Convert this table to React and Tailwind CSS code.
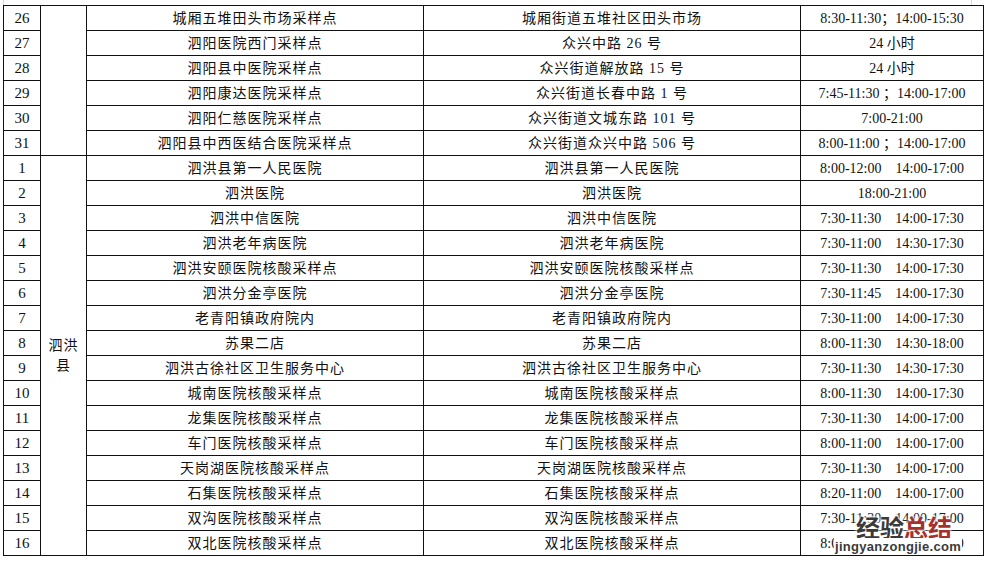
import React from "react";

const upper = [
  ["26", "城厢五堆田头市场采样点", "城厢街道五堆社区田头市场", "8:30-11:30；14:00-15:30"],
  ["27", "泗阳医院西门采样点", "众兴中路 26 号", "24 小时"],
  ["28", "泗阳县中医院采样点", "众兴街道解放路 15 号", "24 小时"],
  ["29", "泗阳康达医院采样点", "众兴街道长春中路 1 号", "7:45-11:30 ；14:00-17:00"],
  ["30", "泗阳仁慈医院采样点", "众兴街道文城东路 101 号", "7:00-21:00"],
  ["31", "泗阳县中西医结合医院采样点", "众兴街道众兴中路 506 号", "8:00-11:00 ；14:00-17:00"],
];

const lower = [
  ["1", "泗洪县第一人民医院", "8:00-12:00    14:00-17:00"],
  ["2", "泗洪医院", "18:00-21:00"],
  ["3", "泗洪中信医院", "7:30-11:30    14:00-17:30"],
  ["4", "泗洪老年病医院", "7:30-11:00    14:30-17:30"],
  ["5", "泗洪安颐医院核酸采样点", "7:30-11:30    14:00-17:30"],
  ["6", "泗洪分金亭医院", "7:30-11:45    14:00-17:30"],
  ["7", "老青阳镇政府院内", "7:30-11:00    14:00-17:30"],
  ["8", "苏果二店", "8:00-11:30    14:30-18:00"],
  ["9", "泗洪古徐社区卫生服务中心", "7:30-11:30    14:30-17:30"],
  ["10", "城南医院核酸采样点", "8:00-11:30    14:00-17:30"],
  ["11", "龙集医院核酸采样点", "7:30-11:30    14:00-17:00"],
  ["12", "车门医院核酸采样点", "8:00-11:00    14:00-17:00"],
  ["13", "天岗湖医院核酸采样点", "7:30-11:30    14:00-17:00"],
  ["14", "石集医院核酸采样点", "8:20-11:00    14:00-17:00"],
  ["15", "双沟医院核酸采样点", "7:30-11:30    14:00-17:00"],
  ["16", "双北医院核酸采样点", "8:00-11:00    14:00-17:00"],
];

const serif = "font-['Liberation_Serif','Noto_Sans_CJK_SC',serif]";
const cjk = "font-['Liberation_Serif','Noto_Sans_CJK_SC',sans-serif]";

function Row({ num, name, addr, time }) {
  return (
    <>
      <div className={`col-start-1 bg-white flex items-center justify-center text-[15px] text-[#111] ${serif}`}>{num}</div>
      <div className={`col-start-3 bg-white flex items-center justify-center text-[14px] tracking-[1px] text-[#111] ${cjk}`}>{name}</div>
      <div className={`col-start-4 bg-white flex items-center justify-center text-[14px] tracking-[1px] text-[#111] ${cjk}`}>{addr}</div>
      <div className={`col-start-5 bg-white flex items-center justify-center text-[14px] whitespace-pre text-[#111] ${cjk}`}>{time}</div>
    </>
  );
}

export default function App() {
  return (
    <div className="relative w-[987px] h-[563px] bg-white overflow-hidden">
      <div className="pt-[5px] pl-[3px]">
        <div className="grid w-fit grid-cols-[36px_45px_336px_376px_182px] grid-rows-[repeat(22,24px)] gap-px p-px bg-[#111]">
          <div className="col-start-2 row-start-1 row-span-6 bg-white"></div>
          <div className={`col-start-2 row-start-7 row-span-16 bg-white flex items-center justify-center text-center text-[14px] leading-[20px] tracking-[1px] text-[#111] ${cjk}`}>
            <span>泗洪<br />县</span>
          </div>
          {upper.map((r, i) => (
            <Row key={"u" + i} num={r[0]} name={r[1]} addr={r[2]} time={r[3]} />
          ))}
          {lower.map((r, i) => (
            <Row key={"l" + i} num={r[0]} name={r[1]} addr={r[1]} time={r[2]} />
          ))}
        </div>
      </div>

      <div className="absolute left-[3px] top-0 w-px h-[5px] bg-[#d8d8d8]"></div>
      <div className="absolute left-[971px] top-0 w-px h-[5px] bg-[#d8d8d8]"></div>

      <div className="absolute left-[856px] top-[514px] flex text-[24px] leading-[26px] font-bold font-['Noto_Sans_CJK_SC',sans-serif] [text-shadow:0_0_2px_#fff,0_0_3px_#fff,0_0_4px_#fff]">
        <span className="text-[#3a3a3a]">经验</span>
        <span className="text-[#a5312f]">总结</span>
      </div>
      <div className="absolute left-[834px] top-[538px] h-[17px] px-[1px] bg-white text-[13px] leading-[17px] font-bold tracking-[0.3px] text-[#3a3a3a] font-['Liberation_Sans',sans-serif]">
        jingyanzongjie.com
      </div>
    </div>
  );
}
